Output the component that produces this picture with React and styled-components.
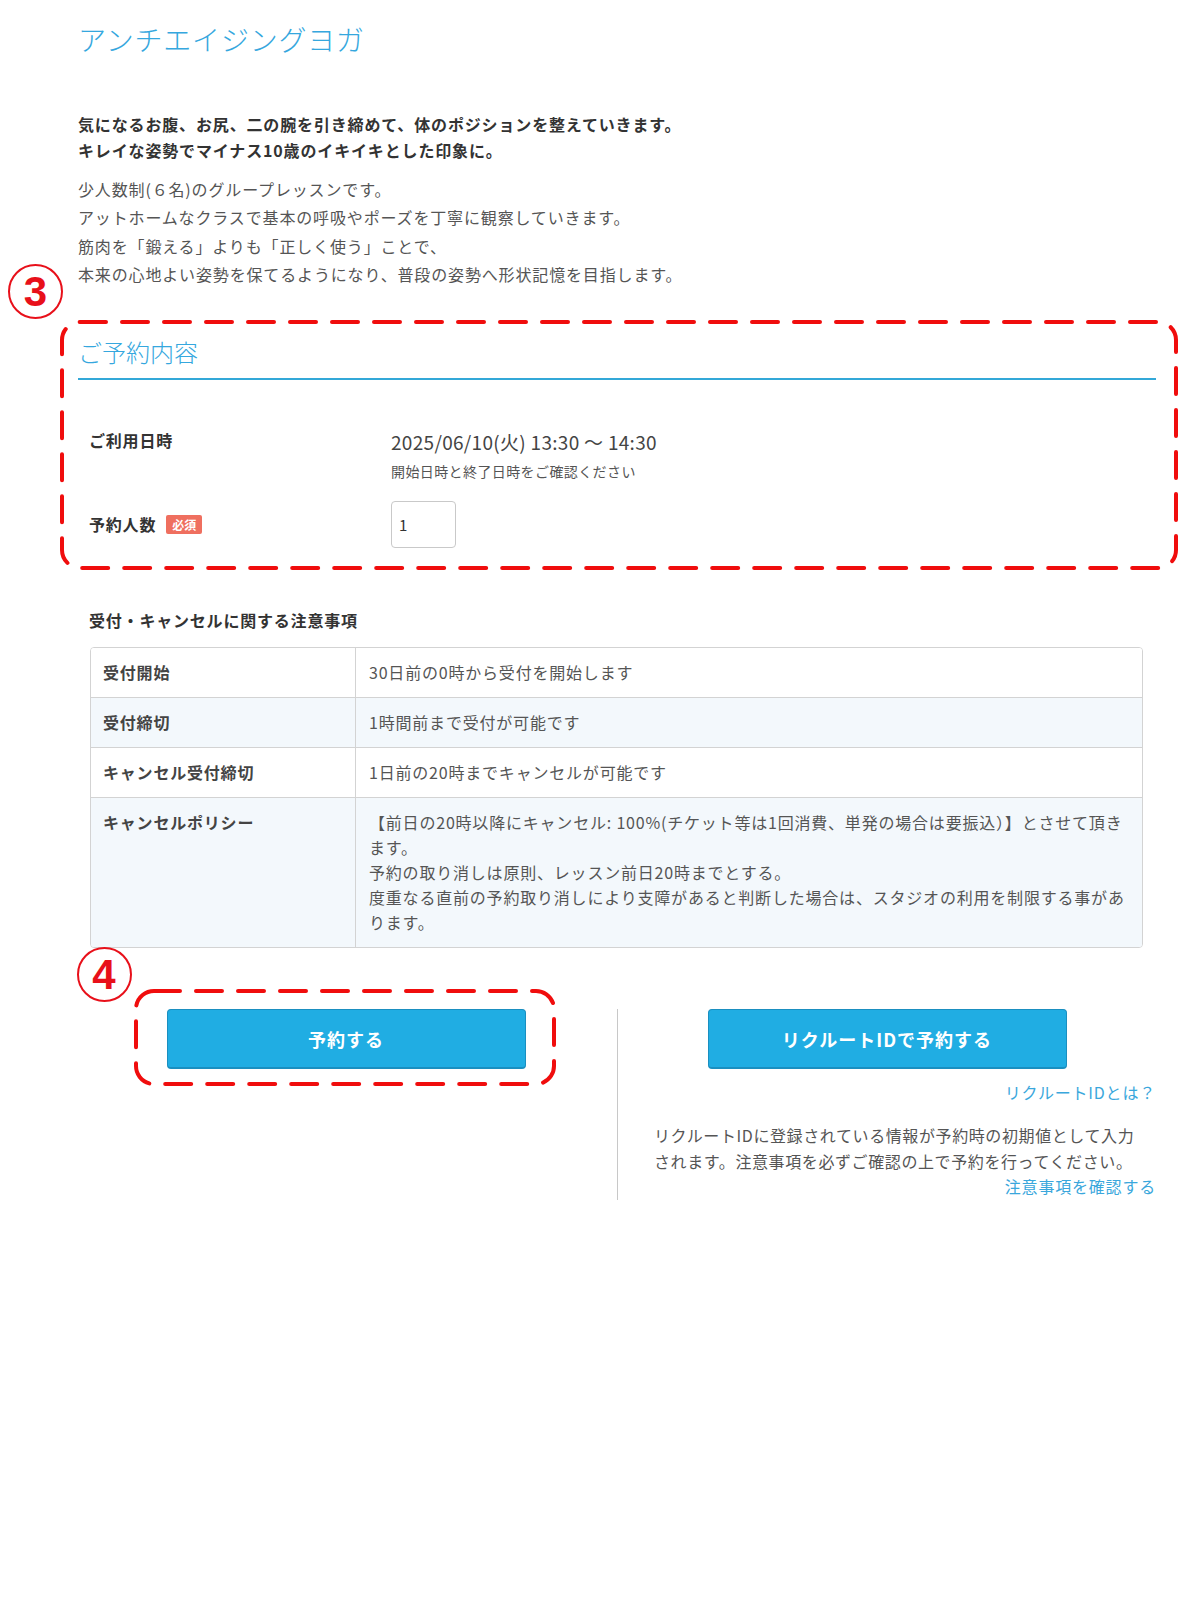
import React from 'react'
import styled, { createGlobalStyle } from 'styled-components'

const GlobalStyle = createGlobalStyle`
  body {
    margin: 0;
    background: #fff;
    font-family: "Noto Sans CJK JP", "Noto Sans", sans-serif;
    color: #333;
  }
`

function DashFrame() {
    return (
        <FrameSvg aria-hidden="true">
            <rect x="0" y="0" width="100%" height="100%" rx="18" />
        </FrameSvg>
    )
}

const policy = [
    { head: '受付開始', body: '30日前の0時から受付を開始します' },
    { head: '受付締切', body: '1時間前まで受付が可能です' },
    { head: 'キャンセル受付締切', body: '1日前の20時までキャンセルが可能です' },
    {
        head: 'キャンセルポリシー',
        body: (
            <>
                【前日の20時以降にキャンセル: 100%(チケット等は1回消費、単発の場合は要振込）】とさせて頂きます。
                <br />
                予約の取り消しは原則、レッスン前日20時までとする。
                <br />
                度重なる直前の予約取り消しにより支障があると判断した場合は、スタジオの利用を制限する事があります。
            </>
        ),
    },
]

function App() {
    return (
        <Page>
            <GlobalStyle />
            <Title>アンチエイジングヨガ</Title>
            <Lead>
                気になるお腹、お尻、二の腕を引き締めて、体のポジションを整えていきます。
                <br />
                キレイな姿勢でマイナス10歳のイキイキとした印象に。
            </Lead>
            <Intro>
                少人数制(６名)のグループレッスンです。
                <br />
                アットホームなクラスで基本の呼吸やポーズを丁寧に観察していきます。
                <br />
                筋肉を「鍛える」よりも「正しく使う」ことで、
                <br />
                本来の心地よい姿勢を保てるようになり、普段の姿勢へ形状記憶を目指します。
            </Intro>

            <Booking>
                <DashFrame />
                <Marker $left={-52} $top={-56}>3</Marker>
                <SectionTitle>ご予約内容</SectionTitle>
                <FormRows>
                    <FormRow>
                        <Label>ご利用日時</Label>
                        <div>
                            <DateText>2025/06/10(火) 13:30 ～ 14:30</DateText>
                            <Note>開始日時と終了日時をご確認ください</Note>
                        </div>
                    </FormRow>
                    <FormRow $center>
                        <Label>
                            予約人数<Badge>必須</Badge>
                        </Label>
                        <CountInput defaultValue="1" />
                    </FormRow>
                </FormRows>
            </Booking>

            <NoticeTitle>受付・キャンセルに関する注意事項</NoticeTitle>
            <Table>
                {policy.map((row, i) => (
                    <TableRow key={row.head} $alt={i % 2 === 1}>
                        <HeadCell>{row.head}</HeadCell>
                        <BodyCell>{row.body}</BodyCell>
                    </TableRow>
                ))}
            </Table>

            <Actions>
                <ActionCol>
                    <Highlight>
                        <DashFrame />
                        <Marker $left={-57} $top={-42}>4</Marker>
                        <PrimaryButton>予約する</PrimaryButton>
                    </Highlight>
                </ActionCol>
                <RecruitCol>
                    <PrimaryButton>リクルートIDで予約する</PrimaryButton>
                    <TextLink>リクルートIDとは？</TextLink>
                    <RecruitText>
                        リクルートIDに登録されている情報が予約時の初期値として入力されます。注意事項を必ずご確認の上で予約を行ってください。
                    </RecruitText>
                    <TextLink $tight>注意事項を確認する</TextLink>
                </RecruitCol>
            </Actions>
        </Page>
    )
}

export default App

const Page = styled.div`
    width: 1078px;
    padding: 19px 0 80px 78px;
`
const Title = styled.h1`
    margin: 0 0 52px;
    font-size: 28px;
    line-height: 40px;
    font-weight: 300;
    letter-spacing: 0.8px;
    color: #35a7de;
`
const Lead = styled.p`
    margin: 0 0 12px;
    font-size: 16px;
    line-height: 26px;
    font-weight: 700;
    letter-spacing: 0.85px;
    color: #333;
`
const Intro = styled.p`
    margin: 0;
    font-size: 16px;
    line-height: 28.3px;
    letter-spacing: 0.85px;
    color: #555;
`
const Booking = styled.section`
    position: relative;
    margin: 32px -22px 0 -18px;
    padding: 15px 22px 22px 18px;
`
const FrameSvg = styled.svg`
    position: absolute;
    top: 2px;
    left: 2px;
    width: calc(100% - 4px);
    height: calc(100% - 4px);
    overflow: visible;
    pointer-events: none;
    rect {
        fill: none;
        stroke: #f00d0d;
        stroke-width: 4;
        stroke-dasharray: 26 16;
        stroke-linecap: round;
    }
`
const Marker = styled.span`
    position: absolute;
    left: ${p => p.$left}px;
    top: ${p => p.$top}px;
    width: 51px;
    height: 51px;
    border: 2.5px solid #e8101a;
    border-radius: 50%;
    display: flex;
    align-items: center;
    justify-content: center;
    color: #e8101a;
    font: 700 42px/1 "Liberation Sans", Arial, sans-serif;
`
const SectionTitle = styled.h2`
    margin: 0;
    padding-bottom: 9px;
    border-bottom: 2px solid #33a8d8;
    font-size: 24px;
    line-height: 34px;
    font-weight: 300;
    color: #35a7de;
`
const FormRows = styled.div`
    display: flex;
    flex-direction: column;
    gap: 20px;
    margin-top: 48px;
    padding-left: 11px;
`
const FormRow = styled.div`
    display: grid;
    grid-template-columns: 302px 1fr;
    align-items: ${p => (p.$center ? 'center' : 'start')};
`
const Label = styled.div`
    display: flex;
    align-items: center;
    gap: 10px;
    margin-top: -1px;
    font-size: 16px;
    line-height: 26px;
    font-weight: 700;
    letter-spacing: 0.8px;
    color: #333;
`
const Badge = styled.span`
    display: inline-block;
    padding: 0 6px;
    border-radius: 2px;
    background: #ef6f5f;
    color: #fff;
    font-size: 12px;
    line-height: 19px;
    font-weight: 700;
    letter-spacing: 0;
`
const DateText = styled.div`
    margin-top: 1px;
    font-size: 19px;
    line-height: 26px;
    letter-spacing: 0.3px;
    color: #444;
`
const Note = styled.div`
    margin-top: 6px;
    font-size: 14px;
    line-height: 20px;
    letter-spacing: 0.4px;
    color: #555;
`
const CountInput = styled.input`
    box-sizing: border-box;
    width: 65px;
    height: 47px;
    padding: 0 7px;
    border: 1px solid #c9c9c9;
    border-radius: 4px;
    font: 15px "Noto Sans CJK JP", sans-serif;
    color: #333;
`
const NoticeTitle = styled.h3`
    margin: 38px 0 15px 11px;
    font-size: 16px;
    line-height: 24px;
    font-weight: 700;
    letter-spacing: 0.8px;
    color: #333;
`
const Table = styled.div`
    margin: 0 13px 0 12px;
    border: 1px solid #d3d3d3;
    border-radius: 4px;
    overflow: hidden;
`
const TableRow = styled.div`
    display: grid;
    grid-template-columns: 265px 1fr;
    background: ${p => (p.$alt ? '#f3f8fc' : '#fff')};
    & + & {
        border-top: 1px solid #d3d3d3;
    }
`
const HeadCell = styled.div`
    padding: 12px 12px;
    border-right: 1px solid #d3d3d3;
    font-size: 16px;
    line-height: 25px;
    font-weight: 700;
    letter-spacing: 0.8px;
    color: #444;
`
const BodyCell = styled.div`
    padding: 12px 13px;
    font-size: 16px;
    line-height: 25px;
    letter-spacing: 0.8px;
    color: #555;
`
const Actions = styled.div`
    display: grid;
    grid-template-columns: 1fr 1fr;
    align-items: start;
    margin-top: 41px;
`
const ActionCol = styled.div`
    display: flex;
    justify-content: center;
    padding-right: 6px;
`
const Highlight = styled.div`
    position: relative;
    padding: 20px 30px 17px 33px;
`
const PrimaryButton = styled.button`
    display: block;
    width: 359px;
    height: 60px;
    border: 1px solid #1a8fc0;
    border-bottom-width: 2px;
    border-radius: 4px;
    background: #20ade3;
    color: #fff;
    font: 700 18px "Noto Sans CJK JP", sans-serif;
    letter-spacing: 1px;
    cursor: pointer;
`
const RecruitCol = styled.div`
    display: flex;
    flex-direction: column;
    align-items: center;
    margin-top: 20px;
    padding-bottom: 2px;
    border-left: 1px solid #c8c8c8;
`
const TextLink = styled.a`
    align-self: flex-end;
    margin-top: ${p => (p.$tight ? '0' : '11px')};
    font-size: 16px;
    line-height: 24px;
    letter-spacing: 0.8px;
    color: #3aa7dc;
    cursor: pointer;
`
const RecruitText = styled.p`
    align-self: stretch;
    margin: 18px 14px 0 36px;
    font-size: 16px;
    line-height: 26px;
    letter-spacing: 0.6px;
    color: #555;
`
